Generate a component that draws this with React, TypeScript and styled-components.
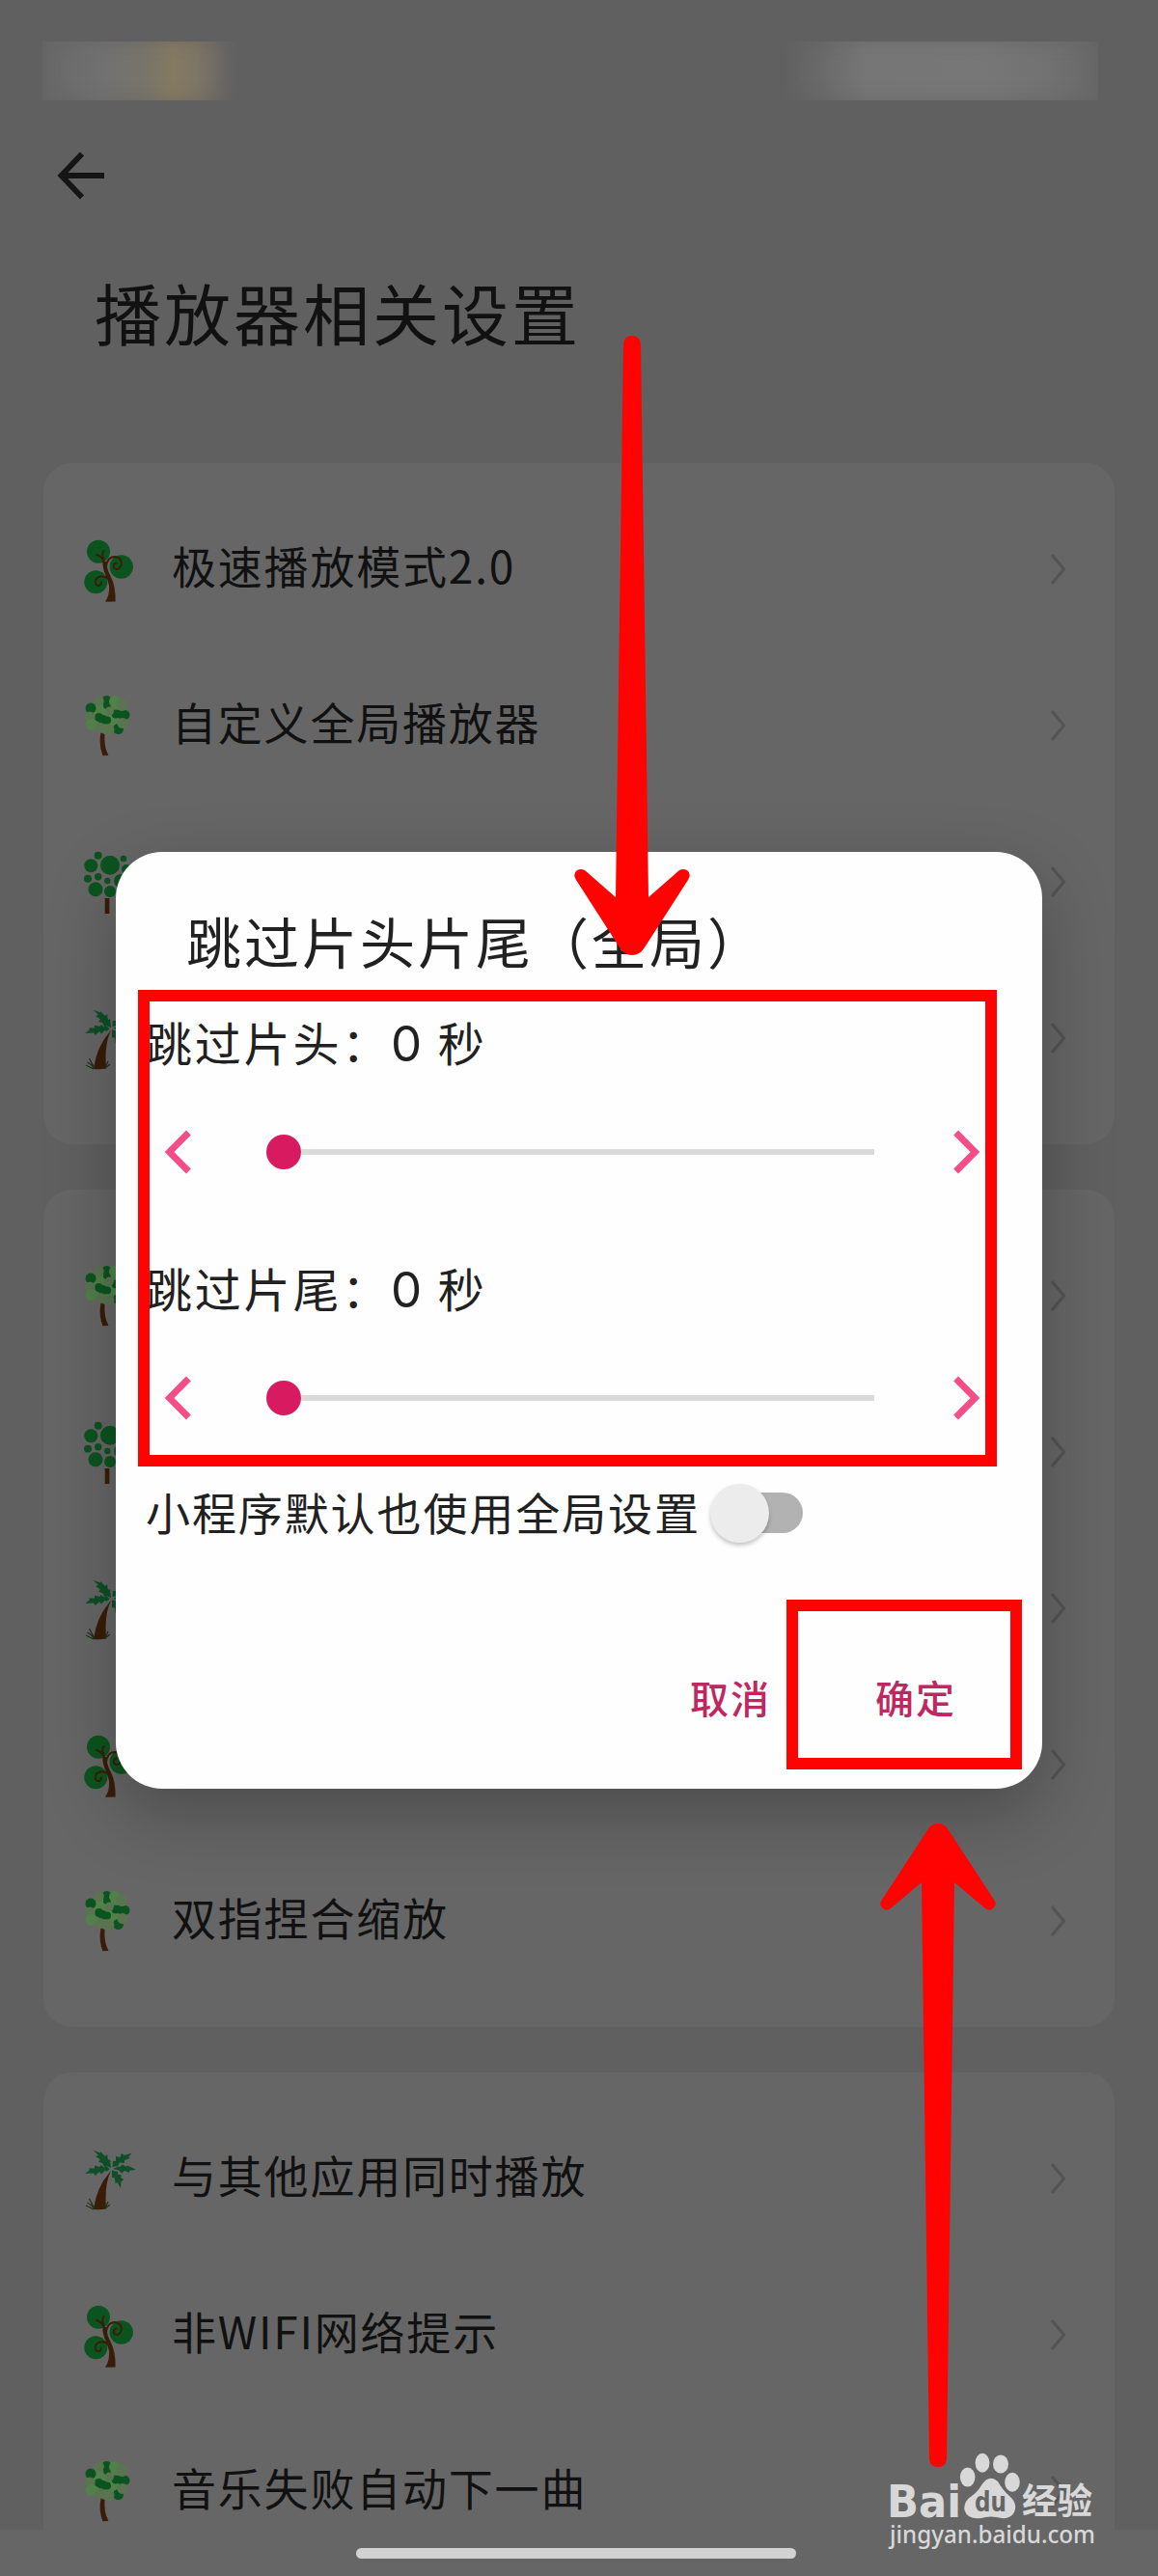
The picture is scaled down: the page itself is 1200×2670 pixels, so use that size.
import styled, { createGlobalStyle } from "styled-components";

type TreeKind = "swirl" | "leafy" | "bubble" | "palm";

type SettingItem = {
  tree: TreeKind;
  label?: string;
};

type BlurPatchProps = {
  $width: number;
  $fill: string;
};

type MarkProps = {
  $x: number;
  $y: number;
  $width: number;
  $height: number;
};

const GlobalStyle = createGlobalStyle`
  * {
    box-sizing: border-box;
  }
  body {
    margin: 0;
    background-color: #606060;
    font-family: "Noto Sans CJK SC", sans-serif;
  }
`;

const Screen = styled.div`
  position: relative;
  width: 1200px;
  height: 2670px;
  overflow: hidden;
  background-color: #606060;
  color: #111111;
`;
const StatusBar = styled.div`
  height: 105px;
  padding: 43px 62px 0px 44px;
  display: flex;
  justify-content: space-between;
`;
const BlurPatch = styled.div<BlurPatchProps>`
  width: ${(props) => props.$width}px;
  height: 61px;
  background: ${(props) => props.$fill};
  box-shadow: inset 0 0 16px rgba(96, 96, 96, 0.55);
`;
const TopBar = styled.div`
  height: 154px;
  padding-left: 59px;
  display: flex;
  align-items: center;
`;
const PageTitle = styled.h1`
  margin: 0px;
  height: 221px;
  padding: 14px 0px 0px 98px;
  font-size: 69px;
  font-weight: 400;
  line-height: 100px;
  letter-spacing: 3px;
`;
const CardList = styled.div`
  padding: 0px 45px;
  display: flex;
  flex-direction: column;
  gap: 47px;
`;
const Card = styled.div`
  padding: 29px 0px;
  border-radius: 30px;
  background-color: #666666;
`;
const Row = styled.div`
  height: 162px;
  padding: 0px 49px 0px 39px;
  display: flex;
  align-items: center;
`;
const TreeIcon = styled.svg`
  width: 60px;
  height: 68px;
  margin-top: 4px;
  flex-shrink: 0;
`;
const RowLabel = styled.span`
  flex: 1;
  margin: -10px 0px 0px 34px;
  font-size: 46px;
  line-height: 60px;
  letter-spacing: 1.8px;
`;
const NavBar = styled.div`
  position: absolute;
  left: 0;
  right: 0;
  bottom: 0;
  height: 48px;
  padding: 19px 0px 0px 369px;
  background-color: #666666;
`;
const NavPill = styled.div`
  width: 456px;
  height: 11px;
  border-radius: 6px;
  background-color: #d2d2d2;
`;
const Dialog = styled.div`
  position: absolute;
  left: 120px;
  top: 883px;
  width: 960px;
  height: 971px;
  padding-top: 54px;
  border-radius: 48px;
  background-color: #fefefe;
  color: #212121;
  box-shadow: 0px 26px 72px rgba(0, 0, 0, 0.26);
`;
const DialogTitle = styled.h2`
  margin: 0px;
  height: 80px;
  padding-left: 73px;
  font-size: 57px;
  font-weight: 400;
  line-height: 74px;
  letter-spacing: 3px;
`;
const Field = styled.div`
  height: 226px;
  margin-bottom: 29px;
`;
const FieldLabel = styled.div`
  height: 128px;
  padding-left: 31px;
  font-size: 48px;
  line-height: 125px;
  letter-spacing: 2.8px;
`;
const FieldValue = styled.span`
  margin-right: 3px;
  font-family: Inter, sans-serif;
  font-size: 51px;
  font-weight: 400;
  letter-spacing: 0px;
`;
const SliderRow = styled.div`
  height: 98px;
  padding: 0px 64px 0px 50px;
  display: flex;
  align-items: center;
  justify-content: space-between;
`;
const Slider = styled.div`
  width: 630px;
  margin-left: -4px;
  display: flex;
  align-items: center;
`;
const SliderThumb = styled.div`
  width: 36px;
  height: 36px;
  border-radius: 50%;
  background-color: #d81b60;
`;
const SliderTrack = styled.div`
  flex: 1;
  height: 6px;
  background-color: #dadada;
`;
const SwitchRow = styled.div`
  height: 82px;
  padding-left: 31px;
  display: flex;
  align-items: center;
`;
const SwitchLabel = styled.span`
  margin-top: -5px;
  font-size: 46px;
  line-height: 60px;
  letter-spacing: 1.9px;
`;
const Switch = styled.div`
  width: 90px;
  height: 42px;
  margin-left: 16px;
  display: flex;
  align-items: center;
  border-radius: 21px;
  background-color: #b2b2b2;
`;
const SwitchThumb = styled.div`
  width: 61px;
  height: 61px;
  margin-left: -6px;
  flex-shrink: 0;
  border-radius: 50%;
  background-color: #ececec;
  box-shadow: 0px 3px 4px rgba(0, 0, 0, 0.22);
`;
const Actions = styled.div`
  height: 100px;
  margin-top: 102px;
  padding-right: 89px;
  display: flex;
  align-items: center;
  justify-content: flex-end;
  gap: 108px;
`;
const TextButton = styled.button`
  padding: 0px;
  border: none;
  background: none;
  color: #bf2760;
  font-family: inherit;
  font-size: 40px;
  font-weight: 500;
  line-height: 56px;
  letter-spacing: 2px;
  margin-top: -4px;
`;
const Frame = styled.div<MarkProps>`
  position: absolute;
  left: ${(props) => props.$x}px;
  top: ${(props) => props.$y}px;
  width: ${(props) => props.$width}px;
  height: ${(props) => props.$height}px;
  border: 12px solid #ff0202;
`;
const Arrow = styled.svg<MarkProps>`
  position: absolute;
  left: ${(props) => props.$x}px;
  top: ${(props) => props.$y}px;
  width: ${(props) => props.$width}px;
  height: ${(props) => props.$height}px;
  fill: #ff0202;
`;
const Watermark = styled.svg`
  position: absolute;
  left: 915px;
  top: 2538px;
  width: 230px;
  height: 112px;
`;

const GREEN = "#0c541f";
const LIGHT = "#52804a";
const MOSS = "#5a7452";
const BARK = "#3a1c08";

const leaves: [number, number, number, string][] = [
  [27, 21, 18, LIGHT],
  [10, 14, 5.5, GREEN],
  [26.5, 6, 5, GREEN],
  [27, 11, 4, GREEN],
  [36, 20, 4.5, GREEN],
  [41, 20, 5, GREEN],
  [45.5, 21, 5, GREEN],
  [18.5, 23.5, 4.5, GREEN],
  [22.5, 26, 5, GREEN],
  [27, 26.5, 4, GREEN],
  [38.5, 35.5, 5.5, GREEN],
  [18.5, 6.5, 5.3, MOSS],
  [35, 7, 6, LIGHT],
  [42.5, 11, 6, MOSS],
  [9, 23, 5.5, MOSS],
  [10.5, 31, 6, LIGHT],
  [43, 29.5, 5.5, MOSS],
  [20, 34.5, 5.5, MOSS],
  [29, 36.5, 5.5, MOSS],
  [29.5, 17, 4.6, MOSS],
];

const bubbles: [number, number, number][] = [
  [17.7, 4.7, 4],
  [10.3, 15.3, 7],
  [30, 14.7, 10],
  [44, 8, 3.3],
  [47, 19, 5],
  [7, 28.7, 4],
  [17.7, 26.7, 3.7],
  [27.3, 31, 3.2],
  [41, 31, 7],
  [15, 39.7, 7.5],
  [30, 42, 6],
];

const Tree = ({ kind }: { kind: TreeKind }) => (
  <TreeIcon viewBox="0 0 60 68">
    {kind === "swirl" && (
      <>
        <circle cx="18" cy="13.8" r="12" fill={GREEN} />
        <circle cx="41.7" cy="29.5" r="12.2" fill={GREEN} />
        <circle cx="15.3" cy="45.3" r="12" fill={GREEN} />
        <path
          d="M22.5 24 L26 24 Q27 33 31 40 Q36 50 35.6 65.5 L25 65.8 Q30 58 29 49 Q28 44 25.5 38 Q22 31 22.5 24Z"
          fill={BARK}
        />
        <g fill="none" stroke={BARK} strokeWidth="1.9" strokeLinecap="round">
          <path d="M24 26 Q23 19 16 17 M23.5 22 Q21 17 23.5 13" />
          <path d="M26 30 Q27 19 35 19 Q43 20 41.5 28 Q39 34 34.5 31 Q32.5 27 36.5 25.5" />
          <path d="M29 42 Q22 37 16.5 41 Q12.5 46 17 49 Q21 49.5 20.8 45.5" />
        </g>
      </>
    )}
    {kind === "leafy" && (
      <>
        {leaves.map(([cx, cy, r, fill], i) => (
          <circle key={i} cx={cx} cy={cy} r={r} fill={fill} />
        ))}
        <path
          d="M20.5 39.5 L24.5 41 Q23.5 54 28.5 63 L22.5 63.2 Q18 52 20.5 39.5Z"
          fill={BARK}
        />
      </>
    )}
    {kind === "bubble" && (
      <>
        {bubbles.map(([cx, cy, r], i) => (
          <circle key={i} cx={cx} cy={cy} r={r} fill={GREEN} />
        ))}
        <rect x="24.7" y="49" width="4.7" height="16" fill={BARK} />
      </>
    )}
    {kind === "palm" && (
      <>
        <g fill="#0e4f28">
          <path d="M31 21 L26 19 L25 21 L22 16 L18 15 L20 12.5 L15 9 L18 8 L12.7 2.8 L20 5.5 L20 4 L25 9 L27 7 L28 13 L30 12Z" />
          <path d="M29.5 22.5 L26 25 L25 23.5 L21 27.5 L19 25 L15 29 L13 26.5 L4.3 27 L9 23 L8 21.5 L14 21.5 L14 18.5 L19 20 L21 18 L24 20.5 L27 19.5Z" />
          <path d="M32.5 20 L33 14 L36 14 L36 9 L40.5 10 L42 6 L45 8 L52.7 5.5 L49 10 L51 11 L45 13 L45 16 L40 15.5 L38 19Z" />
          <path d="M33.5 22 L38 19.5 L40 20 L43 17.5 L46 19.5 L49 19 L57 22.8 L50 24 L50 26 L45 24 L42 26.5 L39 23.5Z" />
          <path d="M32 23.5 L38 25 L38 27.5 L42 28.5 L41 31 L44.5 33 L41.5 35 L41 42 L37.5 36 L35.5 37 L35 31.5 L32 31Z" />
        </g>
        <path
          d="M31 24 Q24 38 26 63.5 Q18 65 13 63.8 Q16 42 28.5 27Z"
          fill={BARK}
        />
        <path
          d="M14 64 Q11 59 6.5 57 M14 63 Q10 56 8.5 53 M13 64 L5 60 M25 63 L28 56 M25 63 L30 59"
          fill="none"
          stroke="#1d3518"
          strokeWidth="1.3"
        />
      </>
    )}
  </TreeIcon>
);

const RowChevron = () => (
  <svg width="18" height="34" viewBox="0 0 18 34">
    <path
      d="M2 2 L14.5 17 L2 32"
      fill="none"
      stroke="#545454"
      strokeWidth="3.2"
    />
  </svg>
);

const StepChevron = ({ right = false }: { right?: boolean }) => (
  <svg width="28" height="46" viewBox="0 0 28 46">
    <path
      d={right ? "M2.6 3 L22.5 23 L2.6 43" : "M25.4 3 L5.5 23 L25.4 43"}
      fill="none"
      stroke="#f64d89"
      strokeWidth="6.8"
    />
  </svg>
);

const cards: SettingItem[][] = [
  [
    { tree: "swirl", label: "极速播放模式2.0" },
    { tree: "leafy", label: "自定义全局播放器" },
    { tree: "bubble" },
    { tree: "palm" },
  ],
  [
    { tree: "leafy" },
    { tree: "bubble" },
    { tree: "palm" },
    { tree: "swirl" },
    { tree: "leafy", label: "双指捏合缩放" },
  ],
  [
    { tree: "palm", label: "与其他应用同时播放" },
    { tree: "swirl", label: "非WIFI网络提示" },
    { tree: "leafy", label: "音乐失败自动下一曲" },
  ],
];

const SkipField = ({ label, seconds }: { label: string; seconds: number }) => (
  <Field>
    <FieldLabel>
      {label}：<FieldValue>{seconds}</FieldValue> 秒
    </FieldLabel>
    <SliderRow>
      <StepChevron />
      <Slider>
        <SliderThumb />
        <SliderTrack />
      </Slider>
      <StepChevron right />
    </SliderRow>
  </Field>
);

const App = () => {
  return (
    <Screen>
      <GlobalStyle />
      <StatusBar>
        <BlurPatch
          $width={206}
          $fill="linear-gradient(90deg, #686868 0%, #717171 30%, #77746b 50%, #857a62 66%, #7d7566 78%, #656463 94%, #606060 100%)"
        />
        <BlurPatch
          $width={330}
          $fill="linear-gradient(90deg, #606060 0%, #696969 12%, #767676 27%, #777777 65%, #717171 85%, #686868 100%)"
        />
      </StatusBar>
      <TopBar>
        <svg width="50" height="50" viewBox="0 0 50 50">
          <path
            d="M49 25 H5 M26 2.5 L4.5 25 L26 47.5"
            fill="none"
            stroke="#151515"
            strokeWidth="5.8"
          />
        </svg>
      </TopBar>
      <PageTitle>播放器相关设置</PageTitle>
      <CardList>
        {cards.map((items, i) => (
          <Card key={i}>
            {items.map((item, j) => (
              <Row key={j}>
                <Tree kind={item.tree} />
                <RowLabel>{item.label}</RowLabel>
                <RowChevron />
              </Row>
            ))}
          </Card>
        ))}
      </CardList>
      <NavBar>
        <NavPill />
      </NavBar>
      <Dialog>
        <DialogTitle>跳过片头片尾（全局）</DialogTitle>
        <SkipField label="跳过片头" seconds={0} />
        <SkipField label="跳过片尾" seconds={0} />
        <SwitchRow>
          <SwitchLabel>小程序默认也使用全局设置</SwitchLabel>
          <Switch>
            <SwitchThumb />
          </Switch>
        </SwitchRow>
        <Actions>
          <TextButton>取消</TextButton>
          <TextButton>确定</TextButton>
        </Actions>
      </Dialog>
      <Frame $x={143} $y={1026} $width={890} $height={494} />
      <Frame $x={815} $y={1658} $width={244} $height={176} />
      <Arrow $x={595} $y={348} $width={120} $height={642} viewBox="0 0 120 642">
        <path d="M51 9 Q52 0 60 0 Q68 0 69 9 L77 582 L109 554 Q113 552 117 554 Q122 558 118 564 L73 634 Q68 642 60 642 Q52 642 47 634 L2 564 Q-2 558 3 554 Q7 552 11 554 L43 582 Z" />
      </Arrow>
      <Arrow $x={912} $y={1890} $width={120} $height={667} viewBox="0 0 120 667">
        <path d="M51 659 Q52 667 60 667 Q68 667 69 659 L77 61 L109 88 Q113 91 117 88 Q122 84 118 79 L71 7 Q67 0 60 0 Q53 0 49 7 L2 79 Q-2 84 3 88 Q7 91 11 88 L43 61 Z" />
      </Arrow>
      <Watermark viewBox="0 0 230 112" fill="#d8d8d8">
        <text
          x="4"
          y="71"
          fontFamily="DejaVu Sans"
          fontSize="47"
          fontWeight="700"
          textLength="77"
          lengthAdjust="spacingAndGlyphs"
        >
          Bai
        </text>
        <ellipse cx="87.7" cy="29.6" rx="7.8" ry="10" />
        <ellipse cx="103" cy="14.7" rx="7.4" ry="10" />
        <ellipse cx="122" cy="16" rx="8" ry="9.6" />
        <ellipse cx="134" cy="34.8" rx="7.8" ry="10" />
        <path d="M102 38 Q110 26 119 34 Q124 43 131 49 Q140 57 136 66 Q132 73 123 72 Q111 69 102 72 Q88 74 84.5 64 Q83 55 92 49 Q98 45 102 38Z" />
        <text
          x="95"
          y="65"
          fill="#666666"
          fontFamily="DejaVu Sans"
          fontSize="28"
          fontWeight="700"
          textLength="33"
          lengthAdjust="spacingAndGlyphs"
        >
          du
        </text>
        <text
          x="144"
          y="68"
          fontFamily="Noto Sans CJK SC"
          fontSize="37"
          fontWeight="700"
          textLength="73"
          lengthAdjust="spacingAndGlyphs"
        >
          经验
        </text>
        <text
          x="7"
          y="98"
          fontFamily="Noto Sans"
          fontSize="25"
          fontWeight="500"
          textLength="213"
          lengthAdjust="spacingAndGlyphs"
        >
          jingyan.baidu.com
        </text>
      </Watermark>
    </Screen>
  );
};

export default App;
